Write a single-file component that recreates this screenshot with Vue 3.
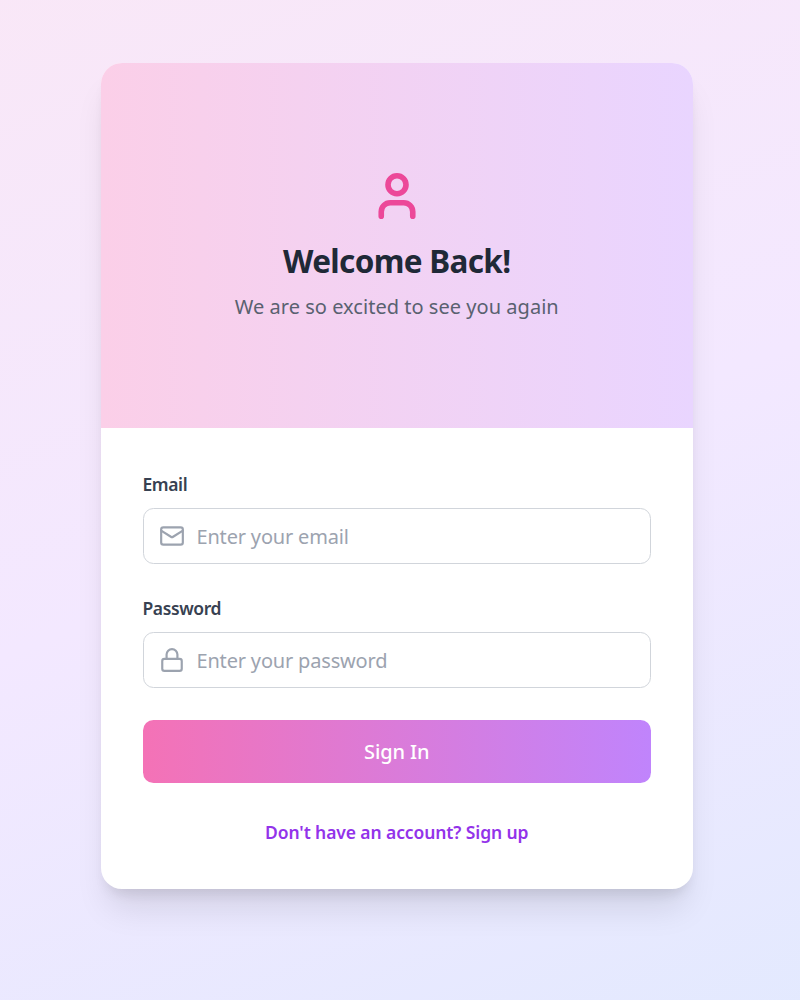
<script setup>
import { ref } from 'vue'
const email = ref('')
const password = ref('')
</script>

<template>
  <main class="page">
    <section class="card">
      <header class="hero">
        <svg class="user" viewBox="0 0 24 24" fill="none" stroke="currentColor" stroke-width="2.5" stroke-linecap="round" stroke-linejoin="round">
          <circle cx="12" cy="7" r="4" />
          <path d="M19 21v-2a4 4 0 0 0-4-4H9a4 4 0 0 0-4 4v2" />
        </svg>
        <h1>Welcome Back!</h1>
        <p>We are so excited to see you again</p>
      </header>
      <form class="form" @submit.prevent>
        <label class="label" for="email">Email</label>
        <div class="field">
          <svg class="icon" viewBox="0 0 24 24" fill="none" stroke="currentColor" stroke-width="2" stroke-linecap="round" stroke-linejoin="round">
            <rect x="2" y="4" width="20" height="16" rx="2" />
            <path d="m22 7-8.97 5.7a1.94 1.94 0 0 1-2.06 0L2 7" />
          </svg>
          <input id="email" v-model="email" type="email" placeholder="Enter your email" />
        </div>
        <label class="label second" for="password">Password</label>
        <div class="field">
          <svg class="icon" viewBox="0 0 24 24" fill="none" stroke="currentColor" stroke-width="2" stroke-linecap="round" stroke-linejoin="round">
            <rect x="3" y="11" width="18" height="11" rx="2" />
            <path d="M7 11V7a5 5 0 0 1 10 0v4" />
          </svg>
          <input id="password" v-model="password" type="password" placeholder="Enter your password" />
        </div>
        <button type="submit">Sign In</button>
        <a class="signup">Don't have an account? Sign up</a>
      </form>
    </section>
  </main>
</template>

<style>
body { margin: 0; }
</style>

<style scoped>
.page {
  box-sizing: border-box;
  height: 1000px;
  padding: 63.4px 107px 0 100.5px;
  background: linear-gradient(to bottom right, #fce7f3, #f3e8ff 50%, #dbeafe) center / 2530px 1000px;
  font-family: "Noto Sans", "Open Sans", sans-serif;
}
.card {
  height: 825.4px;
  overflow: hidden;
  border-radius: 21px;
  background: #fff;
  box-shadow: 0 26px 33px -7px rgba(0, 0, 0, .1), 0 10px 13px -6px rgba(0, 0, 0, .1);
}
.hero {
  box-sizing: border-box;
  height: 365px;
  padding-top: 105.8px;
  display: flex;
  flex-direction: column;
  align-items: center;
  background: linear-gradient(to right, #fbcfe8, #e9d5ff);
}
.user { width: 54px; height: 54px; color: #ec4899; }
h1 {
  margin: 17px 0 0;
  font-size: 31.5px;
  line-height: 42px;
  font-weight: 700;
  letter-spacing: -.68px;
  color: #1f2937;
}
p {
  margin: 10px 0 0;
  font-size: 20px;
  line-height: 30px;
  letter-spacing: .03px;
  color: #596170;
}
.form {
  padding: 42.4px 42px 0;
  display: flex;
  flex-direction: column;
}
.label {
  height: 27px;
  margin-bottom: 9.8px;
  font-size: 17.5px;
  line-height: 27px;
  font-weight: 600;
  letter-spacing: -.4px;
  color: #374151;
}
.second { margin-top: 31.4px; }
.field {
  box-sizing: border-box;
  height: 56px;
  padding-left: 15px;
  display: flex;
  align-items: center;
  gap: 12px;
  border: 1.3px solid #d1d5db;
  border-radius: 10.5px;
}
.icon { flex: none; width: 26px; height: 26px; color: #9ca3af; }
input {
  flex: 1;
  min-width: 0;
  padding: 2px 0 0;
  border: 0;
  outline: 0;
  background: transparent;
  font: 20px/30px "Noto Sans", "Open Sans", sans-serif;
  letter-spacing: -.18px;
  color: #1f2937;
}
input::placeholder { color: #9ca3af; opacity: 1; }
button {
  height: 63px;
  margin-top: 32.2px;
  padding: 1px 0 0;
  border: 0;
  border-radius: 10.5px;
  background: linear-gradient(to right, #f472b6, #c084fc);
  color: #fff;
  font: 500 20px/30px "Noto Sans", "Open Sans", sans-serif;
  letter-spacing: -.1px;
}
.signup {
  align-self: center;
  margin-top: 35.7px;
  font-size: 17.5px;
  line-height: 27px;
  font-weight: 600;
  letter-spacing: -.1px;
  color: #9333ea;
}
</style>
